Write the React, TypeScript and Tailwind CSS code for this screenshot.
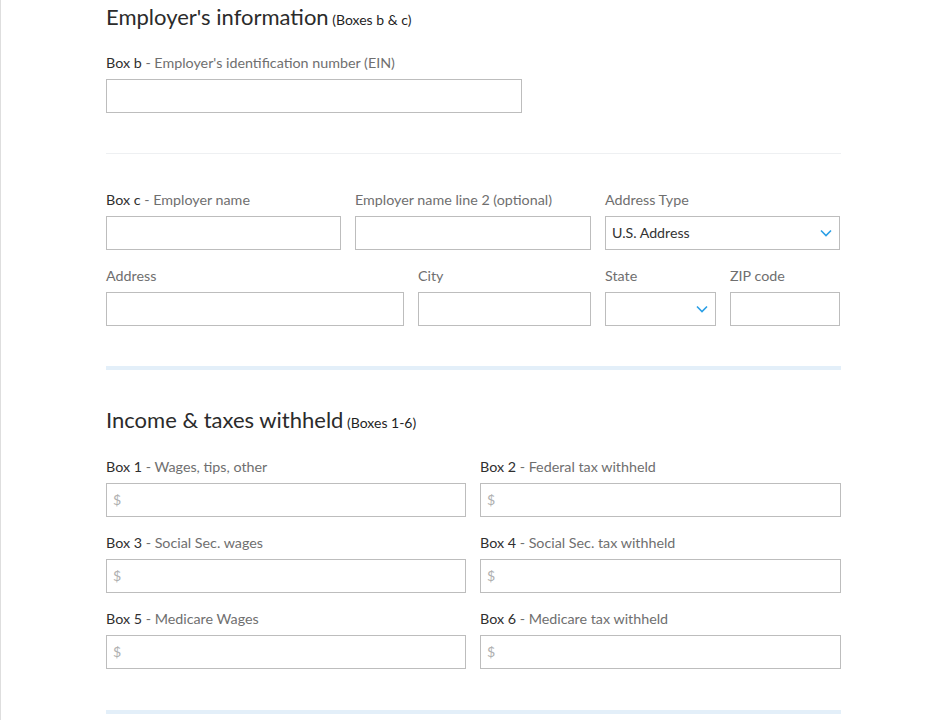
import React from "react";

const Chevron = () => (
  <svg width="12" height="8" viewBox="0 0 12 8" fill="none" className="absolute right-[7px] top-1/2 -translate-y-1/2">
    <path d="M1 1.5L6 6.5L11 1.5" stroke="#2a9fe6" strokeWidth="1.6" />
  </svg>
);

const Label = ({ box, text }: { box?: string; text: string }) => (
  <div className="h-[16px] text-[14.3px] leading-[16px] whitespace-nowrap">
    {box && <span className="text-[#2f2f2f]">{box}</span>}
    {box && <span className="text-[#6f6f6f]"> - </span>}
    <span className="text-[#6f6f6f]">{text}</span>
  </div>
);

const Input = ({ placeholder, children }: { placeholder?: string; children?: React.ReactNode }) => (
  <div className="relative mt-[8px] h-[34px] border border-[#bdbdbd] bg-white flex items-center px-[6px] text-[14.2px]">
    {placeholder && <span className="text-[#b0b0b0]">{placeholder}</span>}
    {children}
  </div>
);

const Field = ({ box, text, placeholder, children }: { box?: string; text: string; placeholder?: string; children?: React.ReactNode }) => (
  <div>
    <Label box={box} text={text} />
    <Input placeholder={placeholder}>{children}</Input>
  </div>
);

export default function App() {
  return (
    <div
      className="w-[946px] h-[720px] overflow-hidden bg-white border-l border-[#dedede]"
      style={{ fontFamily: "Lato, 'Noto Sans', sans-serif" }}
    >
      <div className="ml-[105px] w-[735px] pt-[2px]">
        <div className="h-[30px] leading-[30px] text-[#2b2b2b] whitespace-nowrap">
          <span className="text-[22px]">Employer's information</span>
          <span className="text-[14px] text-[#1f1f1f]"> (Boxes b &amp; c)</span>
        </div>

        <div className="mt-[23px] w-[416px]">
          <Field box="Box b" text="Employer's identification number (EIN)" />
        </div>

        <div className="mt-[40px] h-px bg-[#eef0f2]" />

        <div className="mt-[38px] grid grid-cols-[235px_236px_235px] gap-x-[14px]">
          <Field box="Box c" text="Employer name" />
          <Field text="Employer name line 2 (optional)" />
          <Field text="Address Type">
            <span className="text-[#333]">U.S. Address</span>
            <Chevron />
          </Field>
        </div>

        <div className="mt-[18px] grid grid-cols-[298px_173px_111px_110px] gap-x-[14px]">
          <Field text="Address" />
          <Field text="City" />
          <Field text="State">
            <Chevron />
          </Field>
          <Field text="ZIP code" />
        </div>

        <div className="mt-[40px] h-[4px] bg-[#e3eff9]" />

        <div className="mt-[35px] h-[30px] leading-[30px] text-[#2b2b2b] whitespace-nowrap">
          <span className="text-[22px]">Income &amp; taxes withheld</span>
          <span className="text-[14px] text-[#1f1f1f]"> (Boxes 1-6)</span>
        </div>

        <div className="mt-[24px] grid grid-cols-[360px_361px] gap-x-[14px] gap-y-[18px]">
          <Field box="Box 1" text="Wages, tips, other" placeholder="$" />
          <Field box="Box 2" text="Federal tax withheld" placeholder="$" />
          <Field box="Box 3" text="Social Sec. wages" placeholder="$" />
          <Field box="Box 4" text="Social Sec. tax withheld" placeholder="$" />
          <Field box="Box 5" text="Medicare Wages" placeholder="$" />
          <Field box="Box 6" text="Medicare tax withheld" placeholder="$" />
        </div>

        <div className="mt-[41px] h-[4px] bg-[#e3eff9]" />
      </div>
    </div>
  );
}
